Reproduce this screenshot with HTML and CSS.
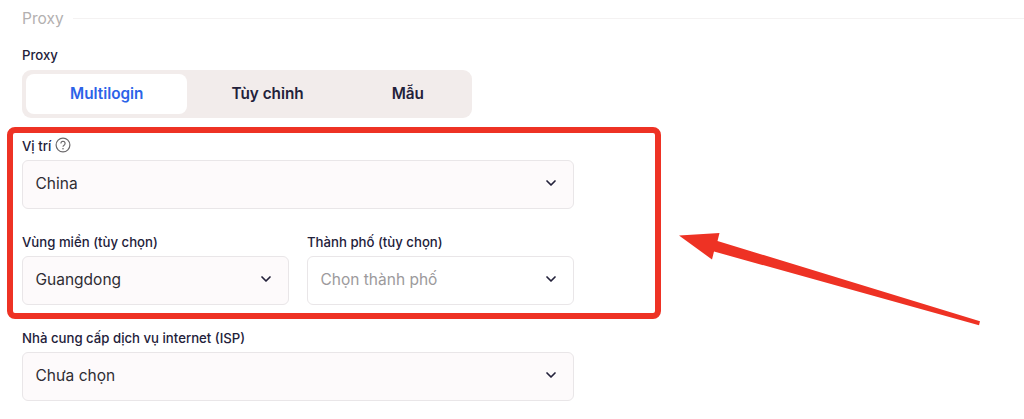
FILE: index.html
```
<!DOCTYPE html>
<html lang="vi">
<head>
    <meta charset="UTF-8">
    <meta name="viewport" content="width=device-width, initial-scale=1.0">
    <title>Proxy</title>
    <link rel="stylesheet" href="styles.css">
</head>
<body>
    <main class="proxy-section">
        <div class="section-title">
            <span>Proxy</span>
            <div class="divider"></div>
        </div>

        <div class="field-label proxy-label">Proxy</div>
        <div class="tabs">
            <button class="tab active">Multilogin</button>
            <button class="tab">Tùy chỉnh</button>
            <button class="tab">Mẫu</button>
        </div>

        <div class="fields">
            <div class="field">
                <div class="field-label">
                    <span>Vị trí</span>
                    <svg class="help-icon" viewBox="0 0 16 16">
                        <circle cx="8" cy="8" r="6.9"/>
                        <path d="M5.9 6.4a2.1 2.1 0 1 1 3.2 1.8C8.3 8.7 8 9 8 9.8"/>
                        <circle class="dot" cx="8" cy="11.7" r="0.8"/>
                    </svg>
                </div>
                <div class="select">
                    <span>China</span>
                    <svg class="chevron" viewBox="0 0 12 12"><path d="M2 4l4 4 4-4"/></svg>
                </div>
            </div>

            <div class="field-row">
                <div class="field">
                    <div class="field-label">Vùng miền (tùy chọn)</div>
                    <div class="select">
                        <span>Guangdong</span>
                        <svg class="chevron" viewBox="0 0 12 12"><path d="M2 4l4 4 4-4"/></svg>
                    </div>
                </div>
                <div class="field">
                    <div class="field-label">Thành phố (tùy chọn)</div>
                    <div class="select empty">
                        <span>Chọn thành phố</span>
                        <svg class="chevron" viewBox="0 0 12 12"><path d="M2 4l4 4 4-4"/></svg>
                    </div>
                </div>
            </div>

            <div class="field">
                <div class="field-label">Nhà cung cấp dịch vụ internet (ISP)</div>
                <div class="select">
                    <span>Chưa chọn</span>
                    <svg class="chevron" viewBox="0 0 12 12"><path d="M2 4l4 4 4-4"/></svg>
                </div>
            </div>
        </div>
    </main>

    <!-- Highlight frame and arrow over the form -->
    <div class="highlight"></div>
    <svg class="arrow" viewBox="0 0 302 93">
        <path d="M0 2.500L40.500 0L38.500 8L301 88.300L300 92.300L35 18.500L33 26.500Z"/>
    </svg>
</body>
</html>
```

FILE: styles.css
```
* {
    margin: 0;
    padding: 0;
    box-sizing: border-box;
}

body {
    background-color: #fff;
    color: #23213a;
    font-family: Inter, sans-serif;
    height: 419px;
    position: relative;
    overflow: hidden;
}

.proxy-section {
    padding: 8px 0 0 22px;
}

.section-title {
    display: flex;
    align-items: center;
    gap: 9px;
    height: 20px;
    font-size: 15.5px;
    color: #b3b0b0;
}

.divider {
    flex: 1;
    height: 1px;
    background-color: #f4f2f2;
}

.field-label {
    display: flex;
    align-items: center;
    gap: 4px;
    height: 20px;
    font-size: 13.2px;
    font-weight: 550;
    white-space: nowrap;
}

.proxy-label {
    margin-top: 17px;
}

/* Tabs */
.tabs {
    display: flex;
    width: 450px;
    height: 48px;
    margin-top: 5px;
    padding: 4px;
    background-color: #f2eceb;
    border-radius: 9px;
}

.tab {
    flex: 1 1 auto;
    padding: 0 43px 1px;
    border: none;
    border-radius: 8px;
    background: none;
    color: #23213a;
    font-family: inherit;
    font-size: 15.3px;
    font-weight: 600;
    white-space: nowrap;
}

.tab.active {
    background-color: #fff;
    color: #2b63e8;
}

/* Fields */
.fields {
    display: flex;
    flex-direction: column;
    gap: 23px;
    width: 552px;
    margin-top: 18px;
}

.field {
    flex: 1;
}

.field-row {
    display: flex;
    gap: 18px;
}

.select {
    display: flex;
    align-items: center;
    justify-content: space-between;
    height: 49px;
    margin-top: 4px;
    padding: 0 16px 3px 12.5px;
    border: 1px solid #e9e6e8;
    border-radius: 6px;
    background-color: #fdfafb;
    color: #2f2d33;
    font-size: 15.5px;
}

.select.empty {
    background-color: #fff;
    color: #9c9a9c;
}

.chevron {
    width: 12px;
    height: 12px;
    fill: none;
    stroke: #23213a;
    stroke-width: 1.7;
    stroke-linecap: round;
    stroke-linejoin: round;
}

.help-icon {
    width: 16px;
    height: 16px;
    margin-top: -2px;
    fill: none;
    stroke: #6b696b;
    stroke-width: 1.2;
}

.help-icon .dot {
    fill: #6b696b;
    stroke: none;
}

.highlight {
    position: absolute;
    top: 127px;
    left: 7px;
    width: 654px;
    height: 192px;
    border: 6px solid #ee3224;
    border-radius: 8px;
}

.arrow {
    position: absolute;
    top: 233px;
    left: 679px;
    width: 302px;
    height: 93px;
    fill: #ee3224;
}
```
